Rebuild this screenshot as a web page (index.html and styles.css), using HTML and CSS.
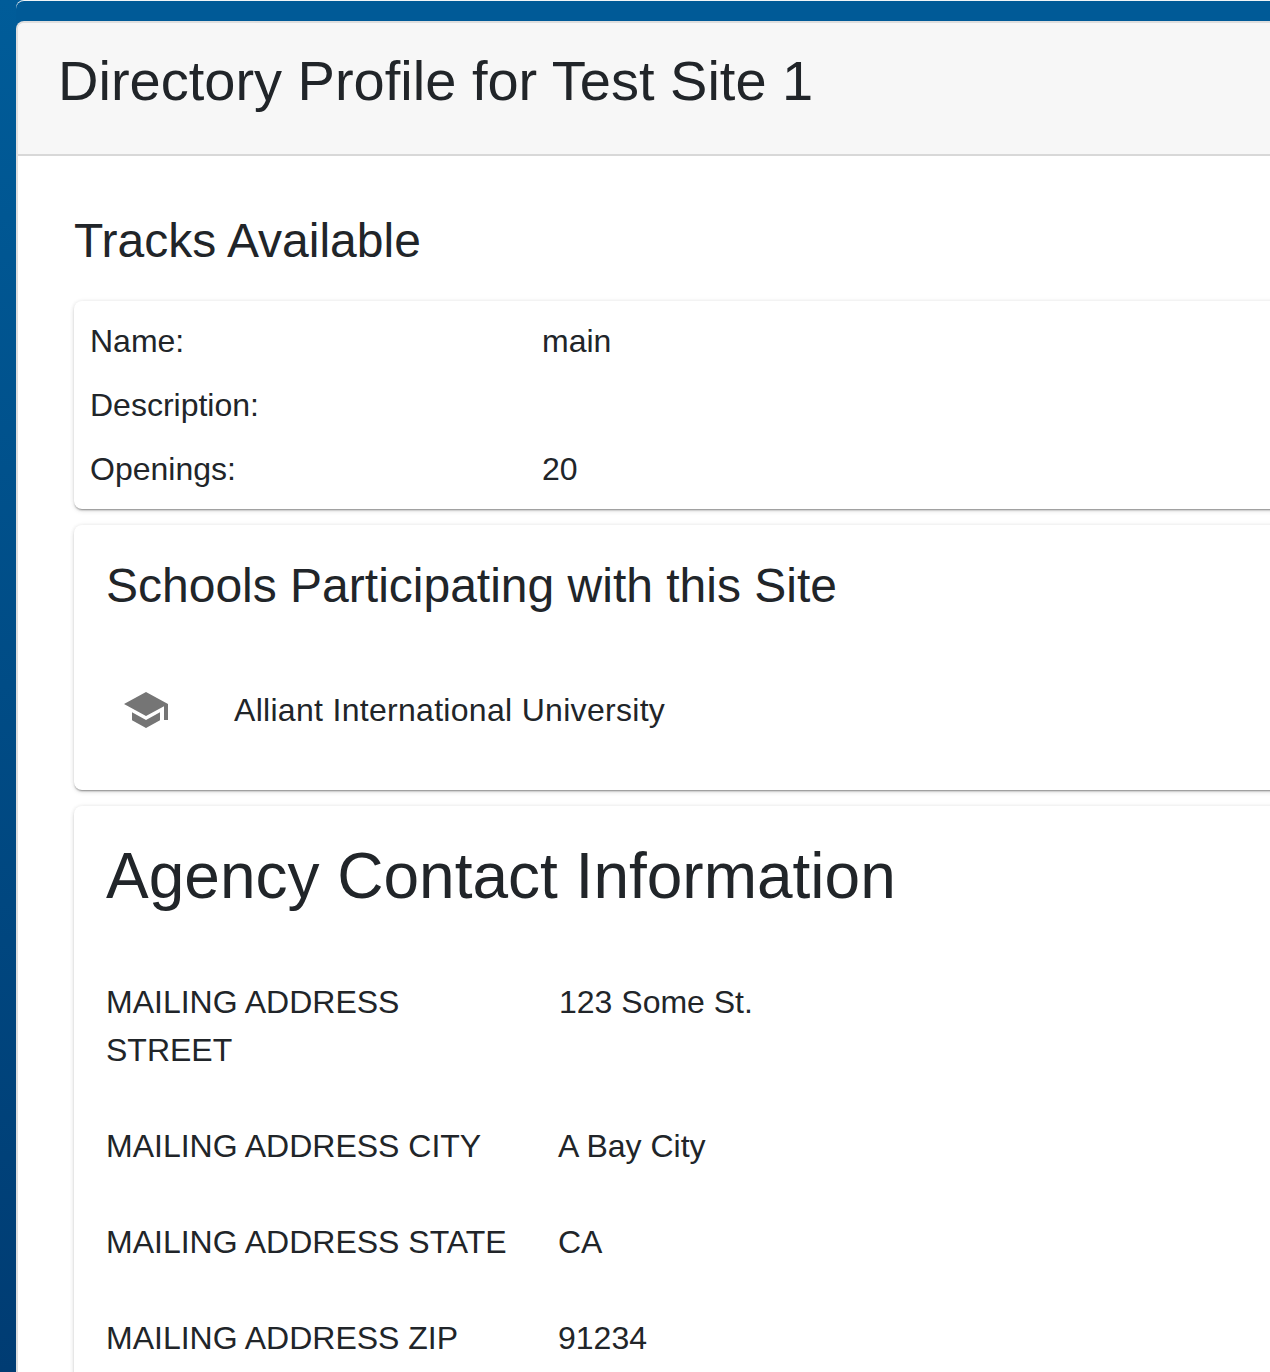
FILE: index.html
```html
<!DOCTYPE html>
<html lang="en">
<head>
<meta charset="utf-8">
<title>Directory Profile for Test Site 1</title>
<link rel="stylesheet" href="styles.css">
</head>
<body>
<main class="panel">
  <header class="panel-header"><h1>Directory Profile for Test Site 1</h1></header>
  <div class="panel-body">
    <h2 class="section-title">Tracks Available</h2>
    <section class="card track-card">
      <div class="track-row"><span class="track-label">Name:</span><span>main</span></div>
      <div class="track-row"><span class="track-label">Description:</span><span></span></div>
      <div class="track-row"><span class="track-label">Openings:</span><span>20</span></div>
    </section>
    <section class="card schools-card">
      <h2 class="card-title">Schools Participating with this Site</h2>
      <div class="school">
        <svg class="school-icon" viewBox="0 0 24 24" aria-hidden="true"><path d="M5 13.18v4L12 21l7-3.82v-4L12 17l-7-3.82zM12 3 1 9l11 6 9-4.91V17h2V9L12 3z"/></svg>
        <span class="school-name">Alliant International University</span>
      </div>
    </section>
    <section class="card contact-card">
      <h2 class="contact-title">Agency Contact Information</h2>
      <div class="contact-row tall"><span class="contact-label">MAILING ADDRESS STREET</span><span class="contact-value">123 Some St.</span></div>
      <div class="contact-row"><span class="contact-label">MAILING ADDRESS CITY</span><span class="contact-value">A Bay City</span></div>
      <div class="contact-row"><span class="contact-label">MAILING ADDRESS STATE</span><span class="contact-value">CA</span></div>
      <div class="contact-row"><span class="contact-label">MAILING ADDRESS ZIP</span><span class="contact-value">91234</span></div>
    </section>
  </div>
</main>
</body>
</html>
```
FILE: styles.css
```css
* { box-sizing: border-box; }
html, body { height: 1372px; overflow: hidden; }
body {
  margin: 0;
  padding: 21px 0 0 16px;
  width: 1270px;
  background: linear-gradient(180deg, #005c99 0%, #003c73 100%);
  font-family: "Liberation Sans", Arial, sans-serif;
  color: #212529;
}
.panel {
  width: 1400px;
  height: 1500px;
  background: #fff;
  border-top-left-radius: 8px;
  border-left: 2px solid rgba(0,0,0,.125);
  border-top: 2px solid rgba(0,0,0,.125);
  box-shadow: 0 -20px 0 #005a97, 0 -21px 0 #f0f4f7;
}
.panel-header {
  height: 133px;
  padding: 24px 40px;
  background: #f7f7f7;
  border-bottom: 2px solid #d8d8d8;
  border-top-left-radius: 6px;
}
h1, h2 { margin: 0; font-weight: 400; }
.panel-header h1 { font-size: 56px; line-height: 67px; }
.panel-body { padding: 56px 0 0 56px; }
.section-title { font-size: 48px; line-height: 58px; margin-bottom: 31px; }
.card {
  width: 1300px;
  background: #fff;
  border-radius: 8px;
  box-shadow: 0 2px 2px -1px rgba(0,0,0,.4), 0 2px 5px rgba(0,0,0,.1), 0 0 4px rgba(0,0,0,.08);
  margin-bottom: 16px;
}
.track-card { height: 208px; padding: 8px 16px; font-size: 32px; }
.track-row { display: flex; height: 64px; align-items: center; }
.track-label { width: 452px; }
.schools-card { height: 265px; padding: 32px; }
.card-title { font-size: 48px; line-height: 58px; }
.school { display: flex; align-items: center; margin-top: 63px; height: 64px; }
.school-icon { width: 48px; height: 48px; fill: #757575; margin-left: 16px; }
.school-name { font-size: 32px; margin-left: 64px; letter-spacing: .3px; }
.contact-card { padding: 32px; height: 800px; }
.contact-title { font-size: 64px; line-height: 77px; margin-bottom: 39px; }
.contact-row { display: flex; height: 96px; padding-top: 24px; font-size: 32px; line-height: 48px; }
.contact-row.tall { height: 144px; }
.contact-label { width: 452px; padding-right: 32px; }
.contact-row.tall .contact-label { width: 453px; }
```
